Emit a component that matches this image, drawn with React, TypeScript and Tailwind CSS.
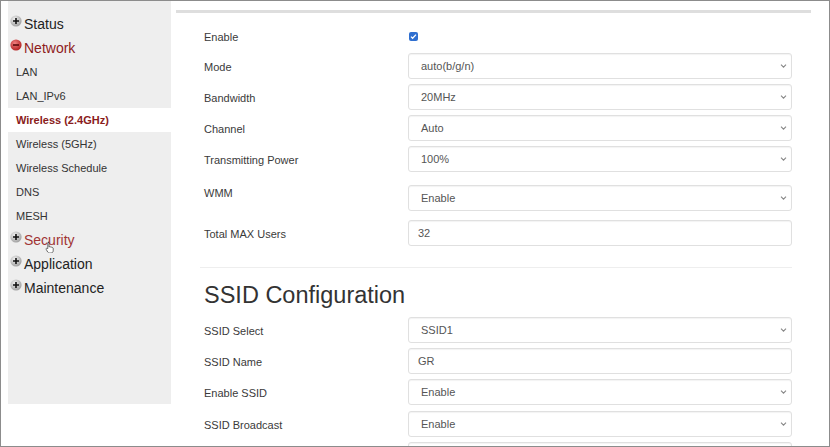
import React from "react";

const font = { fontFamily: '"Liberation Sans", Arial, sans-serif' };

function PlusIcon() {
  return (
    <svg width="12" height="12" viewBox="0 0 12 12" className="shrink-0 self-start mt-[3px] mr-[2px]">
      <defs>
        <radialGradient id="gp" cx="40%" cy="35%" r="70%">
          <stop offset="0%" stopColor="#f4f4f4" />
          <stop offset="100%" stopColor="#9a9a9a" />
        </radialGradient>
      </defs>
      <circle cx="6" cy="6" r="5.6" fill="url(#gp)" />
      <path d="M6 3v6M3 6h6" stroke="#111" strokeWidth="1.6" />
    </svg>
  );
}

function MinusIcon() {
  return (
    <svg width="12" height="12" viewBox="0 0 12 12" className="shrink-0 self-start mt-[3px] mr-[2px]">
      <defs>
        <radialGradient id="gm" cx="40%" cy="35%" r="70%">
          <stop offset="0%" stopColor="#f08080" />
          <stop offset="100%" stopColor="#b01a1a" />
        </radialGradient>
      </defs>
      <circle cx="6" cy="6" r="5.6" fill="url(#gm)" />
      <path d="M3 6h6" stroke="#5a0a0a" strokeWidth="1.6" />
    </svg>
  );
}

function Chevron() {
  return (
    <svg width="7" height="5" viewBox="0 0 7 5" className="absolute right-[4px] top-1/2 -translate-y-1/2">
      <path d="M1 1.2l2.5 2.5L6 1.2" fill="none" stroke="#888" strokeWidth="1.1" />
    </svg>
  );
}

function TopItem({ label, color, open }: { label: string; color: string; open?: boolean }) {
  return (
    <div className="h-[24px] flex items-center pl-[2px]">
      {open ? <MinusIcon /> : <PlusIcon />}
      <span className={`text-[14px] ${color}`}>{label}</span>
    </div>
  );
}

function SubItem({ label, active }: { label: string; active?: boolean }) {
  return (
    <div
      className={`h-[24px] flex items-center pl-[8px] text-[11px] ${
        active ? "bg-white font-bold text-[#8a1c1c]" : "text-[#333]"
      }`}
    >
      {label}
    </div>
  );
}

function Select({ value }: { value: string }) {
  return (
    <div className="relative w-[384px] h-[26px] border border-[#e0e0e0] rounded-[3px] bg-white shadow-[inset_0_1px_1px_rgba(0,0,0,0.05)] flex items-center pl-[12px] text-[11px] text-[#555]">
      {value}
      <Chevron />
    </div>
  );
}

function TextInput({ value }: { value: string }) {
  return (
    <div className="w-[384px] h-[26px] border border-[#e0e0e0] rounded-[3px] bg-white shadow-[inset_0_1px_1px_rgba(0,0,0,0.05)] flex items-center pl-[9px] text-[11px] text-[#555]">
      {value}
    </div>
  );
}

function Row({ label, children, className = "" }: { label: string; children: React.ReactNode; className?: string }) {
  return (
    <div className={`flex items-center ${className}`}>
      <div className="w-[204px] pt-[2px] text-[11px] text-[#3a3a3a]">{label}</div>
      {children}
    </div>
  );
}

export default function App() {
  return (
    <div
      style={font}
      className="w-[830px] h-[447px] border border-[#8c8c8c] bg-white flex overflow-hidden"
    >
      <div className="ml-[7px] w-[163px] h-[403px] bg-[#eeeeee] pt-[11px] shrink-0">
        <TopItem label="Status" color="text-[#222]" />
        <TopItem label="Network" color="text-[#8e1b1b]" open />
        <SubItem label="LAN" />
        <SubItem label="LAN_IPv6" />
        <SubItem label="Wireless (2.4GHz)" active />
        <SubItem label="Wireless (5GHz)" />
        <SubItem label="Wireless Schedule" />
        <SubItem label="DNS" />
        <SubItem label="MESH" />
        <div className="relative">
          <TopItem label="Security" color="text-[#a13535]" />
          <svg width="10" height="12" viewBox="0 0 10 12" className="absolute left-[37px] top-[13px]">
            <path
              d="M3 1.2c.6 0 1 .4 1 1V6l.6-.3c.5-.2 1 .1 1.2.5.5-.2 1 0 1.2.4.5-.2 1.1.1 1.2.6v2.6c0 1.3-1 2.2-2.3 2.2H4.6c-.8 0-1.5-.4-1.900-1L1.2 8.4c-.3-.5 0-1.1.6-1.200.4 0 .7.2 1 .5V2.2c0-.6.4-1 1-1z"
              fill="#fff"
              stroke="#333"
              strokeWidth="0.7"
            />
          </svg>
        </div>
        <TopItem label="Application" color="text-[#222]" />
        <TopItem label="Maintenance" color="text-[#222]" />
      </div>

      <div className="flex-1 pt-[9px]">
        <div className="ml-[5px] w-[635px] h-[3px] bg-[#dedede]" />
        <div className="pl-[33px]">
          <Row label="Enable" className="h-[26px] mt-[10px]">
            <span className="ml-[1px] w-[9px] h-[9px] rounded-[2px] bg-[#2f6fd0] flex items-center justify-center">
              <svg width="7" height="7" viewBox="0 0 7 7">
                <path d="M1 3.6l1.6 1.6L6 1.6" fill="none" stroke="#fff" strokeWidth="1.3" />
              </svg>
            </span>
          </Row>
          <Row label="Mode" className="mt-[4px]">
            <Select value="auto(b/g/n)" />
          </Row>
          <Row label="Bandwidth" className="mt-[5px]">
            <Select value="20MHz" />
          </Row>
          <Row label="Channel" className="mt-[5px]">
            <Select value="Auto" />
          </Row>
          <Row label="Transmitting Power" className="mt-[5px]">
            <Select value="100%" />
          </Row>
          <div className="flex items-start mt-[13px]">
            <div className="w-[204px] text-[11px] text-[#3a3a3a] leading-[14px] pt-[1px]">WMM</div>
            <Select value="Enable" />
          </div>
          <Row label="Total MAX Users" className="mt-[9px]">
            <TextInput value="32" />
          </Row>
          <div className="mt-[21px] -ml-[4px] w-[592px] h-px bg-[#eeeeee]" />
          <h2 className="mt-[13px] h-[28px] leading-[28px] text-[23.5px] text-[#333]">SSID Configuration</h2>
          <Row label="SSID Select" className="mt-[8px]">
            <Select value="SSID1" />
          </Row>
          <Row label="SSID Name" className="mt-[5px]">
            <TextInput value="GR" />
          </Row>
          <Row label="Enable SSID" className="mt-[5px]">
            <Select value="Enable" />
          </Row>
          <Row label="SSID Broadcast" className="mt-[6px]">
            <Select value="Enable" />
          </Row>
          <Row label="" className="mt-[5px]">
            <Select value="" />
          </Row>
        </div>
      </div>
    </div>
  );
}
